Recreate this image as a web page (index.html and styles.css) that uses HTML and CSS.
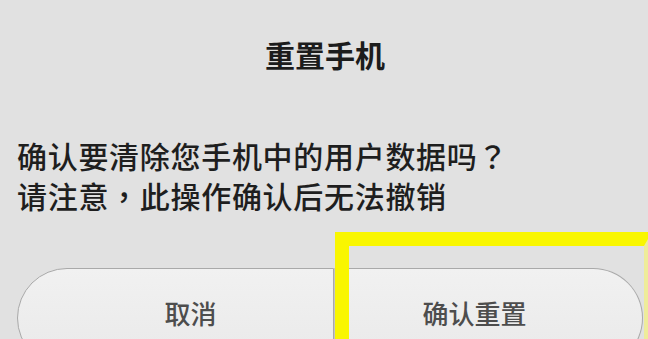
FILE: index.html
```html
<!DOCTYPE html>
<html>
<head>
    <meta charset="UTF-8">
    <title>重置手机</title>
    <link rel="stylesheet" href="styles.css">
</head>
<body class="body">
    <div class="dialog">
        <div class="title">重置手机</div>
        <div class="message">
            <p>确认要清除您手机中的用户数据吗<span class="punct">？</span></p>
            <p>请注意<span class="punct">，</span>此操作确认后无法撤销</p>
        </div>
        <div class="buttons">
            <div class="btn btn-left">取消</div>
            <div class="btn btn-right">确认重置</div>
        </div>
    </div>
    <!-- yellow mark drawn over the confirm button -->
    <div class="mark"></div>
</body>
</html>
```

FILE: styles.css
```css
.body{
    margin:0px;
    height:339px;
    overflow:hidden;
    position:relative;
    background-color:#e1e1e1;
    font-family:"Noto Sans CJK SC", "Noto Sans", sans-serif;
}
.dialog{
    padding-top:39px;
}
.title{
    font-size:30px;line-height:30px;
    font-weight:bold;
    text-align:center;
    color:#1c1c1c;
    padding-left:2px;
}
.message{
    margin-top:66px;
    padding-left:17px;
    color:#1e1e1e;
}
.message p{
    margin:0px;
    font-size:30px;line-height:40px;
    font-weight:500;
    letter-spacing:0.7px;
}
.punct{
    font-family:"Noto Sans CJK TC", sans-serif;
}
.buttons{
    display:flex;
    margin-top:53px;
    margin-left:17px;
    width:626px;
}
.btn{
    height:100px;
    box-sizing:border-box;
    padding-top:29px;
    font-size:26px;line-height:30px;
    font-weight:500;
    text-align:center;
    color:#4d4d4d;
    border:1px solid #a9a9a9;
    background:linear-gradient(#f1f1f1, #e9e9e9);
}
.btn-left{
    width:317px;
    padding-left:30px;
    border-radius:62px 0 0 62px;
}
.btn-right{
    width:309px;
    padding-right:28px;
    border-left:1px solid #c4c4c4;
    border-radius:0 62px 62px 0;
}
.mark{
    position:absolute;
    left:335px;top:232px;
    width:295px;height:140px;
    border:14px solid #f9f600;
    border-right-width:8px;
    border-right-color:#eeec9a;
}
```
